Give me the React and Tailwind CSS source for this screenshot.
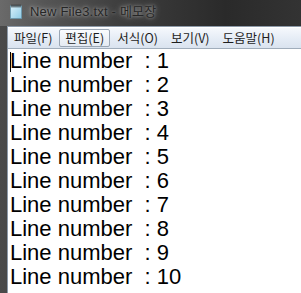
import React from "react";

const lines = [1, 2, 3, 4, 5, 6, 7, 8, 9, 10];

function NoteIcon() {
  return (
    <svg width="12" height="15" viewBox="0 0 12 15">
      <defs>
        <linearGradient id="pg" x1="0" y1="0" x2="1" y2="1">
          <stop offset="0" stopColor="#d9f1fb" />
          <stop offset="1" stopColor="#8ecbe6" />
        </linearGradient>
      </defs>
      <rect x="0.5" y="2" width="11" height="12.5" fill="url(#pg)" stroke="#6a9ab0" strokeWidth="0.8" />
      {[1.5, 3.5, 5.5, 7.5, 9.5].map((x) => (
        <rect key={x} x={x} y="0.5" width="1" height="3" fill="#333" />
      ))}
    </svg>
  );
}

const items = ["파일(F)", "편집(E)", "서식(O)", "보기(V)", "도움말(H)"];

export default function App() {
  return (
    <div className="w-[301px] h-[293px] overflow-hidden flex flex-col bg-[linear-gradient(90deg,#4a4a4a,#3a3a3a_30%,#2e2e2e_60%,#3a3a3a)]" style={{ fontFamily: '"Liberation Sans", Arial, sans-serif' }}>
      <div className="h-[26px] flex items-center pl-[10px] gap-[6px] shrink-0 bg-[linear-gradient(90deg,#6a6a6a,#555_15%,#3e3e3e_40%,#2a2a2a_75%,#333)]">
        <div className="mt-[-3px]"><NoteIcon /></div>
        <span className="text-[13px] tracking-[0.2px] text-[#262626] mt-[-3px] px-[2px] [text-shadow:0_0_6px_rgba(255,255,255,0.5),0_0_3px_rgba(255,255,255,0.45)]" style={{ fontFamily: '"Liberation Sans", "Noto Sans CJK KR", sans-serif' }}>
          New File3.txt - 메모장
        </span>
      </div>
      <div className="flex-1 flex flex-col ml-[7px] border-l border-t border-[#8c99a8] min-h-0">
        <div className="h-[21px] shrink-0 flex items-center gap-[1px] border-t border-white bg-[linear-gradient(180deg,#f5f8fc,#e6edf6_50%,#dae3ef)] text-[12.5px] text-[#1e1e1e]" style={{ fontFamily: '"Noto Sans CJK KR", sans-serif' }}>
          {items.map((t, i) => (
            <span
              key={t}
              className={
                i === 1
                  ? "px-[5px] leading-[16px] border border-[#9aa6b4] rounded-[2px] bg-[linear-gradient(180deg,#fafcfe,#e4eaf2)]"
                  : "px-[5px] leading-[16px] border border-transparent"
              }
            >
              {t}
            </span>
          ))}
        </div>
        <div className="flex-1 bg-white border-t border-[#a0adbb] pl-[2px]">
          {lines.map((n, i) => (
            <div key={n} className="relative text-[22px] leading-[24px] text-black whitespace-pre">
              {i === 0 && <span className="absolute left-[0px] top-[3px] w-px h-[20px] bg-black" />}
              {"Line number  : " + n}
            </div>
          ))}
        </div>
      </div>
    </div>
  );
}
